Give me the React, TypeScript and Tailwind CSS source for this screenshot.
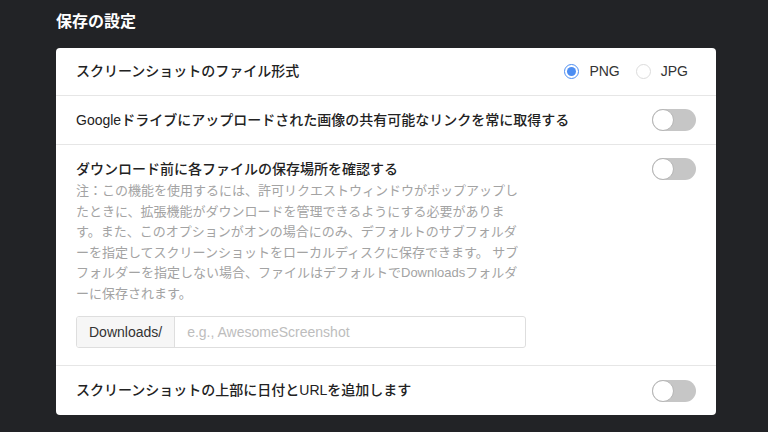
import React from "react"

const font = { fontFamily: '"Liberation Sans", "Noto Sans CJK JP", sans-serif' }

function Toggle() {
  return (
    <div className="relative h-[22px] w-[44px] shrink-0 rounded-full bg-[#c6c6c6]">
      <div className="absolute left-0 top-0 h-[22px] w-[22px] rounded-full border border-[#b5b5b5] bg-white" />
    </div>
  )
}

function Radio({ checked, label }: { checked?: boolean; label: string }) {
  return (
    <label className="flex items-center gap-[10px] text-[14px] text-[#333]">
      {checked ? (
        <span className="flex h-[15px] w-[15px] items-center justify-center rounded-full border border-[#4d8ef2] bg-white">
          <span className="h-[9px] w-[9px] rounded-full bg-[#4d8ef2]" />
        </span>
      ) : (
        <span className="h-[15px] w-[15px] rounded-full border border-[#dcdcdc] bg-white" />
      )}
      {label}
    </label>
  )
}

const note = [
  "注：この機能を使用するには、許可リクエストウィンドウがポップアップし",
  "たときに、拡張機能がダウンロードを管理できるようにする必要がありま",
  "す。また、このオプションがオンの場合にのみ、デフォルトのサブフォルダ",
  "ーを指定してスクリーンショットをローカルディスクに保存できます。 サブ",
  "フォルダーを指定しない場合、ファイルはデフォルトでDownloadsフォルダ",
  "ーに保存されます。",
]

export default function App() {
  return (
    <div className="min-h-[432px] w-[768px] bg-[#222326] pl-14 pt-[10px]" style={font}>
      <h1 className="mb-[14px] h-6 text-[16px] font-bold leading-6 text-white">保存の設定</h1>

      <div className="w-[660px] overflow-hidden rounded-[4px] bg-white text-[#222]">
        {/* file format */}
        <div className="flex h-12 items-center justify-between border-b border-[#e6e6e6] px-5">
          <span className="text-[14px] font-medium">スクリーンショットのファイル形式</span>
          <div className="flex items-center gap-4 pr-2">
            <Radio checked label="PNG" />
            <Radio label="JPG" />
          </div>
        </div>

        {/* google drive */}
        <div className="flex h-[49px] items-center justify-between border-b border-[#e6e6e6] px-5">
          <span className="text-[14px] font-medium">Googleドライブにアップロードされた画像の共有可能なリンクを常に取得する</span>
          <Toggle />
        </div>

        {/* ask before download */}
        <div className="border-b border-[#e6e6e6] px-5 pb-[17px] pt-[13px]">
          <div className="flex items-start justify-between">
            <div>
              <div className="text-[14px] font-medium leading-[22px]">ダウンロード前に各ファイルの保存場所を確認する</div>
              <p className="mt-[1px] text-[13px] leading-[20.5px] text-[#a3a3a3]">
                {note.map((line) => (
                  <span key={line} className="block whitespace-nowrap">
                    {line}
                  </span>
                ))}
              </p>
            </div>
            <Toggle />
          </div>

          <div className="mt-3 flex h-8 w-[450px] overflow-hidden rounded-[3px] border border-[#dedede]">
            <div className="flex items-center border-r border-[#dedede] bg-[#f6f6f6] px-3 text-[14px] text-[#333]">
              Downloads/
            </div>
            <input
              className="flex-1 px-3 text-[14px] text-[#333] outline-none placeholder:text-[#bdbdbd]"
              placeholder="e.g., AwesomeScreenshot"
              style={font}
            />
          </div>
        </div>

        {/* date and url */}
        <div className="flex h-[49px] items-center justify-between px-5">
          <span className="text-[14px] font-medium">スクリーンショットの上部に日付とURLを追加します</span>
          <Toggle />
        </div>
      </div>
    </div>
  )
}
